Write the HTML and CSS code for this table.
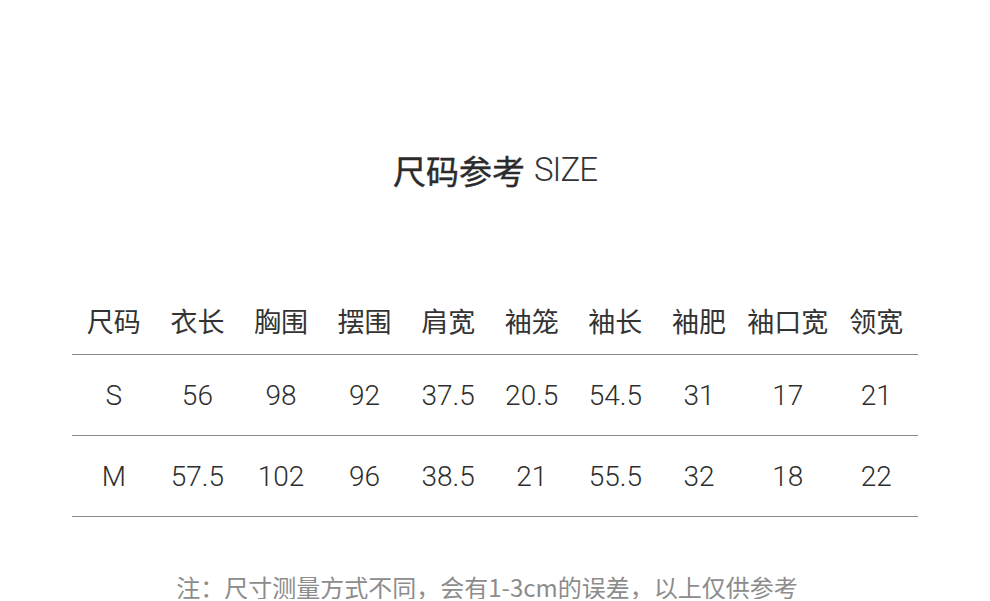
FILE: index.html
```html
<!DOCTYPE html>
<html lang="zh">
<head>
<meta charset="utf-8">
<link rel="stylesheet" href="styles.css">
</head>
<body>
<div class="page">
  <h1 class="title"><span class="title-cn">尺码参考</span> <span class="title-en">SIZE</span></h1>
  <div class="table">
    <div class="row head">
      <div>尺码</div><div>衣长</div><div>胸围</div><div>摆围</div><div>肩宽</div><div>袖笼</div><div>袖长</div><div>袖肥</div><div>袖口宽</div><div>领宽</div>
    </div>
    <div class="row data">
      <div>S</div><div>56</div><div>98</div><div>92</div><div>37.5</div><div>20.5</div><div>54.5</div><div>31</div><div>17</div><div>21</div>
    </div>
    <div class="row data">
      <div>M</div><div>57.5</div><div>102</div><div>96</div><div>38.5</div><div>21</div><div>55.5</div><div>32</div><div>18</div><div>22</div>
    </div>
  </div>
  <p class="note">注：尺寸测量方式不同，会有1-3cm的误差，以上仅供参考</p>
</div>
</body>
</html>
```

FILE: styles.css
```css
html, body {
  margin: 0;
  padding: 0;
  background: #fff;
}
.page {
  width: 990px;
  padding-top: 150px;
  box-sizing: border-box;
  display: flex;
  flex-direction: column;
  align-items: center;
}
.title {
  margin: 0;
  height: 40px;
  line-height: 40px;
  font-weight: normal;
  color: #333;
  display: flex;
  align-items: center;
  gap: 9px;
}
.title-cn {
  font-family: "Noto Sans CJK SC", sans-serif;
  font-size: 33px;
  font-weight: 400;
  color: #2b2b2b;
  -webkit-text-stroke: 0.4px #2b2b2b;
}
.title-en {
  font-family: "Roboto", "Liberation Sans", sans-serif;
  font-size: 33px;
  font-weight: 300;
  color: #333;
  letter-spacing: -1px;
}
.table {
  margin-top: 98px;
  width: 846px;
}
.row {
  display: grid;
  grid-template-columns: repeat(8, 83.6px) 94px 83px;
  align-items: center;
  justify-items: center;
  border-bottom: 1px solid #8a8a8a;
  color: #333;
}
.head {
  height: 66px;
  font-family: "Noto Sans CJK SC", sans-serif;
  font-size: 27px;
  font-weight: 400;
}
.head div {
  line-height: 1;
  margin-top: -1px;
}
.data {
  height: 80px;
  font-family: "Roboto", "Liberation Sans", sans-serif;
  font-size: 28px;
  font-weight: 300;
  color: #2e2e2e;
}
.note {
  margin: 58px 0 0 -16px;
  line-height: 24px;
  font-family: "Noto Sans CJK SC", sans-serif;
  font-size: 24px;
  color: #8c8c8c;
}
```
